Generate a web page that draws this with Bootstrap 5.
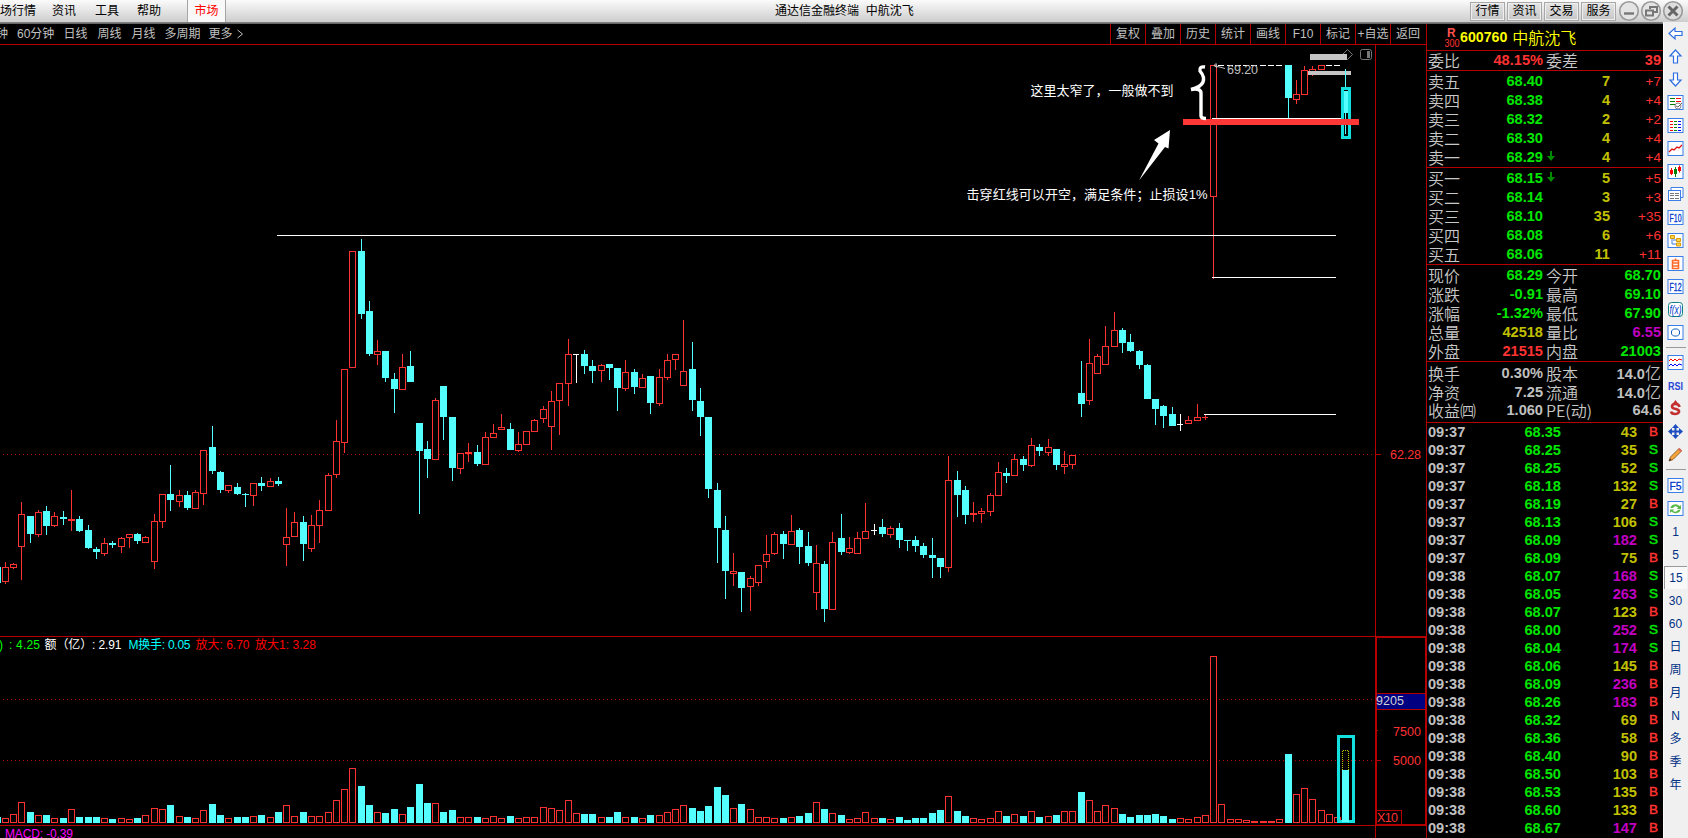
<!DOCTYPE html>
<html lang="zh-CN">
<head>
<meta charset="utf-8">
<title>通达信金融终端 中航沈飞</title>
<link href="https://cdn.jsdelivr.net/npm/bootstrap@5.3.0/dist/css/bootstrap.min.css" rel="stylesheet">
<style>
body{width:1688px;height:838px;overflow:hidden;background:#000;color:#c0c0c0;font-family:"Liberation Sans","Noto Sans CJK SC",sans-serif;font-size:12px;line-height:1}
.topbar{height:24px;background:linear-gradient(#fbfbfb,#cdcdcd 22px,#8a8a8a 22px,#5c5c5c 24px);color:#000}
.topbar>div{height:22px}
.menus{width:187px}
.menus span{white-space:nowrap}
.tab-market{width:39px;background:#f8f8f8;border:solid #a5a5a5;border-width:0 1px;color:#f00}
.app-title{width:549px}
.tbtn{width:35px;height:19px;border:1px solid #a8a8a8;box-shadow:inset 0 0 0 1px #eee;background:linear-gradient(#e4e4e4,#c6c6c6);white-space:nowrap}
.workarea{width:1427px}
.periodbar{height:21px;border-bottom:1px solid #b40000;border-right:1px solid #b40000}
.periodbar .plist{width:1110px;white-space:nowrap}
.tool{width:35px;border-left:1px solid #b40000;white-space:nowrap}
.chart{display:block;font-family:"Liberation Sans","Noto Sans CJK SC",sans-serif}
.quote{width:236px;height:814px;overflow:hidden}
.stockname{height:27px;border-bottom:1px solid #b40000;color:#ff0;font-size:15.5px}
.sect{border-bottom:1px solid #b40000;padding-top:1px}
.sect.five{height:97px}
.qrow{height:19px;display:grid;grid-template-columns:50px 65px 67px 51px;padding-left:1px;align-items:center;white-space:nowrap}
.qrow.pair{grid-template-columns:50px 65px 38px 80px}
.qrow.pair>i:nth-child(3){padding-left:3px}
.lbl,.qrow i{font-style:normal;font-size:16px;font-weight:350;font-family:"Noto Sans CJK SC",sans-serif;line-height:19px}
.qrow>i{color:#c8c8c8}
.qrow b{font-size:14.6px;text-align:right;line-height:19px;position:relative}
.qrow b .dn{position:absolute;left:68px;top:3px}
.qrow u{text-decoration:none;font-size:13.5px;text-align:right;color:#ff3232}
.trow{height:18px;display:grid;grid-template-columns:60px 73px 76px 21px;padding-left:1px;font-size:14.6px;font-weight:bold;line-height:18px;text-align:right}
.trow :first-child{text-align:left}
.trow .bs{font-size:13.5px;font-weight:400;-webkit-text-stroke:.5px}
.g{color:#00e600}.y{color:#c0c000}.r{color:#ff3232}.m{color:#c000c0}.w{color:#c0c0c0}
.side{width:25px;height:816px;margin-top:-2px;background:#f0f0f0;color:#003184;border-left:1px solid #fff}
.cell{height:23px;width:23px;font-size:12px}
.cell.on{background:#f9f9f9;border:solid #999;border-width:1px 0 0 1px}
.sep{height:7px;padding-top:3px}
.sep:after{content:"";display:block;height:1px;background:#9a9a9a;margin:0 2px}
</style>
<script src="https://cdn.jsdelivr.net/npm/bootstrap@5.3.0/dist/js/bootstrap.bundle.min.js"></script>
</head>
<body>
<header class="topbar d-flex">
  <div class="menus d-flex align-items-center"><span>场行情</span><span style="margin-left:16px">资讯</span><span style="margin-left:19px">工具</span><span style="margin-left:18px">帮助</span></div>
  <div class="tab-market d-flex align-items-center justify-content-center">市场</div>
  <div class="app-title flex-shrink-0"></div>
  <div class="d-flex align-items-center text-nowrap">通达信金融终端&nbsp;&nbsp;中航沈飞</div>
  <div class="d-flex align-items-center ms-auto" style="gap:2px">
    <span class="tbtn d-flex align-items-center justify-content-center">行情</span>
    <span class="tbtn d-flex align-items-center justify-content-center">资讯</span>
    <span class="tbtn d-flex align-items-center justify-content-center">交易</span>
    <span class="tbtn d-flex align-items-center justify-content-center">服务</span>
    <svg width="70" height="22" fill="none" stroke="#999">
      <g fill="#e4e4e4" stroke-width="1.6"><circle cx="11" cy="11" r="9.3"/><circle cx="33" cy="11" r="9.3"/><circle cx="55" cy="11" r="9.3" fill="#ddd"/></g>
      <path d="M6 13.500h10" stroke="#777" stroke-width="2.400"/>
      <path d="M32 9V7h7v5h-3" stroke="#777" stroke-width="2"/><rect x="28" y="10.500" width="7" height="5" stroke="#777" stroke-width="2" fill="#e4e4e4"/>
      <path d="M50.500 6.500l9 9M59.500 6.500l-9 9" stroke="#666" stroke-width="3"/>
    </svg>
  </div>
</header>
<main class="d-flex">
  <div class="workarea flex-shrink-0">
    <nav class="periodbar d-flex">
      <div class="plist d-flex align-items-center overflow-hidden"><span style="margin-left:-4px">钟</span><span style="margin-left:9px">60分钟</span><span style="margin-left:9px">日线</span><span style="margin-left:10px">周线</span><span style="margin-left:10px">月线</span><span style="margin-left:9px">多周期</span><span style="margin-left:8px">更多</span>
        <svg width="8" height="10" class="ms-1"><path d="M1.500 1l5 4-5 4" fill="none" stroke="#c0c0c0"/></svg></div>
      <div class="tool d-flex align-items-center justify-content-center">复权</div>
      <div class="tool d-flex align-items-center justify-content-center">叠加</div>
      <div class="tool d-flex align-items-center justify-content-center">历史</div>
      <div class="tool d-flex align-items-center justify-content-center">统计</div>
      <div class="tool d-flex align-items-center justify-content-center">画线</div>
      <div class="tool d-flex align-items-center justify-content-center">F10</div>
      <div class="tool d-flex align-items-center justify-content-center">标记</div>
      <div class="tool d-flex align-items-center justify-content-center">+自选</div>
      <div class="tool d-flex align-items-center justify-content-center">返回</div>
    </nav>
    <svg id="chart" class="chart" width="1427" height="793" viewBox="0 45 1427 793">
      <g fill="#b40000" shape-rendering="crispEdges">
        <rect x="1375" y="45" width="1" height="793"/><rect x="1426" y="45" width="1" height="793"/>
        <rect x="0" y="636" width="1427" height="1"/><rect x="0" y="825" width="1427" height="1"/>
        <rect x="1375" y="454" width="6" height="1"/><rect x="1376" y="730" width="2" height="1"/><rect x="1376" y="760" width="5" height="1"/>
      </g>
      <g stroke="#b40000" stroke-dasharray="1 3" shape-rendering="crispEdges"><path d="M3 454.500H1375M3 699.500H1375M3 760.500H1375"/></g>
      <rect x="1376" y="637" width="50" height="188" fill="none" stroke="#b40000" stroke-width="2" shape-rendering="crispEdges"/>
      <g shape-rendering="crispEdges" stroke="#b40000"><rect x="1376.500" y="693.500" width="49" height="16" fill="#000080"/><rect x="1376.500" y="810.500" width="25" height="14" fill="none"/></g>
      <g id="bars" shape-rendering="crispEdges"></g>
      <g shape-rendering="crispEdges">
        <g fill="#fff"><rect x="277" y="235" width="1059" height="1"/><rect x="1212" y="277" width="124" height="1"/><rect x="1204" y="414" width="132" height="1"/><rect x="1212" y="118" width="129" height="1"/></g>
        <rect x="1308" y="71" width="43" height="4" fill="#c4c4c4"/>
        <rect x="1342.500" y="88.500" width="7" height="49" fill="none" stroke="#14dfdf" stroke-width="3"/>
        <g fill="#54ffff"><rect x="1345" y="69" width="1" height="18"/><rect x="1344" y="91" width="4" height="22"/><rect x="1345" y="113" width="1" height="21"/></g>
        <rect x="1183" y="119" width="176" height="6" fill="#ff3737"/>
        <rect x="1338.500" y="736.500" width="15" height="85" fill="none" stroke="#14dfdf" stroke-width="3"/>
        <rect x="1342" y="770" width="7" height="52" fill="#54ffff"/>
        <path d="M1342.500 770V750.500H1348.500V770" fill="none" stroke="#c8c800" stroke-dasharray="1 1"/>
      </g>
      <path d="M1347.500 49.500l5 5-5 5-5-5z" fill="none" stroke="#777"/>
      <rect x="1310" y="54" width="37" height="6" fill="#c4c4c4"/>
      <rect x="1360.500" y="49.500" width="11" height="10" rx="2" fill="none" stroke="#777"/><rect x="1367" y="51" width="3" height="7" fill="#777"/>
      <path d="M1205 67Q1199 66 1200 71Q1205 77 1203 82Q1201 87 1191 89.500Q1201 88 1201 93V116Q1201 118.500 1206 118.500" fill="none" stroke="#fff" stroke-width="3.400"/>
      <path d="M1139 180.500L1158.500 143.500L1154 140L1170 130L1168.500 148.500L1165 147Z" fill="#fff"/>
      <path d="M1214 65.500L1225 68.500M1214 65.500l2-2 1 4z" fill="none" stroke="#c0c0c0"/>
      <g fill="#fff" font-size="13"><text x="1030.500" y="94.500" textLength="143">这里太窄了，一般做不到</text><text x="966.500" y="198.500" textLength="241">击穿红线可以开空，满足条件；止损设1%</text></g>
      <g font-size="12.500">
        <text x="1227" y="74" fill="#c0c0c0" textLength="31">69.20</text>
        <g fill="#ff3232"><text x="1390" y="459" textLength="31">62.28</text><text x="1393" y="736" textLength="28">7500</text><text x="1393" y="765" textLength="28">5000</text><text x="1377" y="822" textLength="21">X10</text></g>
        <text x="1376" y="705" fill="#d0d0d0" textLength="28">9205</text>
      </g>
      <g font-size="12">
        <text x="-1" y="649" fill="#0f0">)</text><text x="9" y="649" fill="#0f0" textLength="31">: 4.25</text>
        <text x="44.500" y="649" fill="#fff" textLength="77">额（亿）: 2.91</text>
        <text x="128.500" y="649" fill="#0ff" textLength="62">M换手: 0.05</text>
        <g fill="#f00"><text x="195.500" y="649" textLength="54">放大: 6.70</text><text x="255" y="649" textLength="61">放大1: 3.28</text></g>
        <text x="5" y="838" fill="#f0f" textLength="68">MACD: -0.39</text>
      </g>
    </svg>
  </div>
  <section class="quote flex-shrink-0">
    <div class="stockname d-flex align-items-center">
      <svg width="33" height="26" class="flex-shrink-0" font-family="Liberation Sans"><text x="20" y="13" font-size="12" font-weight="bold" fill="#ff5050">R</text><text x="17.500" y="23" font-size="11" fill="#ff3232" textLength="15" lengthAdjust="spacingAndGlyphs">300</text></svg>
      <b style="font-size:14.2px">600760</b><span class="lbl" style="margin-left:5px">中航沈飞</span>
    </div>
    <div class="sect" style="height:20px;padding:0"><div class="qrow pair"><i>委比</i><b class="r">48.15%</b><i>委差</i><b class="r">39</b></div></div>
    <div id="quotes"></div>
    <div id="ticks"></div>
  </section>
  <aside class="side flex-shrink-0" id="side"></aside>
</main>
<script>
// left, high, body top, body bottom, low, kind (r hollow, c filled, w/x flat), volume top
const K=`-6 567 567 583 583 c 817
2 562 567 582 584 r 818
10 563 564 568 569 r 814
18 502 514 547 580 r 802
27 516 516 534 543 c 812
35 510 512 535 537 r 815
43 506 511 526 535 c 815
51 512 516 526 527 r 818
60 511 517 519 525 c 818
68 490 519 521 531 r 809
76 516 519 531 532 c 817
85 525 530 548 549 c 817
93 547 549 552 559 c 817
101 538 543 554 556 r 818
109 541 543 545 548 c 819
118 537 538 547 553 r 818
126 534 534 538 548 r 819
134 533 534 541 544 c 818
142 536 537 543 543 r 815
151 514 521 562 569 r 808
159 494 494 522 528 r 809
167 465 494 500 511 c 805
176 490 495 502 507 r 816
184 491 495 508 510 c 817
192 490 492 509 509 r 818
200 450 450 494 505 r 810
209 426 447 471 474 c 804
217 471 472 490 493 c 815
225 485 485 491 493 r 818
234 483 487 494 495 c 817
242 493 494 495 507 c 817
250 483 483 496 506 r 816
258 477 483 486 491 c 815
267 478 481 487 487 r 817
275 477 481 484 486 c 812
283 508 537 545 566 r 805
291 512 522 537 537 r 816
300 516 522 544 561 c 812
308 515 525 549 552 r 816
316 500 510 526 543 r 816
325 473 475 511 511 r 812
333 420 441 475 478 r 800
341 369 369 443 453 r 789
349 251 251 368 368 r 768
358 239 251 314 319 c 786
366 301 311 354 356 c 805
374 340 351 355 365 r 812
382 351 351 378 382 c 813
391 373 379 389 413 c 809
399 354 367 390 390 r 814
407 351 366 382 382 c 807
416 423 423 451 514 c 784
424 441 449 459 478 c 803
432 398 400 460 460 r 803
440 386 386 417 440 c 812
449 417 417 468 481 c 810
457 453 453 469 474 r 817
465 443 452 454 462 r 817
474 445 452 464 466 c 817
482 432 437 465 465 r 818
490 424 433 438 438 r 816
498 414 427 430 430 r 818
507 423 429 450 450 c 816
515 432 444 451 452 r 818
523 431 431 445 445 r 817
531 419 420 432 432 r 817
540 406 409 419 423 r 807
548 391 401 427 450 r 808
556 383 383 401 435 r 810
565 339 354 384 406 r 800
573 354 354 355 383 w 813
581 350 354 366 374 c 814
589 360 366 371 383 c 814
598 364 365 371 382 r 817
606 364 364 368 380 c 817
614 368 368 388 411 c 812
622 360 372 389 391 r 817
631 369 372 387 394 c 817
639 374 378 388 388 r 818
647 376 376 403 414 c 815
656 369 377 404 406 r 815
664 354 360 378 380 r 812
672 354 354 360 370 r 809
680 320 371 386 386 r 805
689 342 369 400 411 c 808
697 388 401 417 436 c 811
705 417 417 489 498 c 806
714 483 490 528 563 c 787
722 516 530 571 599 c 795
730 553 571 574 586 r 808
738 572 572 588 612 c 804
747 576 578 587 611 r 809
755 565 565 583 586 r 817
763 535 554 562 568 r 817
771 532 534 554 555 r 818
780 531 534 544 559 c 818
788 515 531 545 545 r 817
796 528 530 547 564 c 816
805 532 546 563 566 c 813
813 545 563 593 610 r 802
821 561 564 609 622 c 809
829 532 542 610 610 r 813
838 514 538 552 555 c 815
846 537 548 553 554 r 819
854 532 538 554 554 r 818
862 503 531 539 539 r 812
871 524 530 531 535 w 818
879 519 527 534 537 c 818
887 526 528 535 538 r 819
896 523 528 540 548 c 817
904 540 540 541 551 c 820
912 536 540 546 552 c 818
920 543 546 555 558 c 818
929 538 555 558 578 c 813
937 558 558 567 578 c 810
945 456 480 568 572 r 796
954 471 480 495 517 c 811
962 486 490 515 524 c 816
970 502 513 515 522 r 818
978 508 511 514 523 r 819
987 493 495 512 516 r 818
995 462 472 496 496 r 811
1003 468 473 476 483 c 816
1011 454 459 476 476 r 814
1020 456 459 465 471 c 816
1028 438 445 466 467 r 811
1036 444 447 451 456 c 817
1045 439 447 453 456 r 816
1053 449 449 465 470 c 815
1061 451 464 467 474 r 811
1069 455 455 465 469 r 811
1078 361 393 404 417 c 792
1086 339 363 401 405 r 800
1094 354 356 374 374 r 811
1102 326 346 365 365 r 805
1111 312 330 347 347 r 808
1119 328 330 343 353 c 814
1127 334 342 351 352 c 817
1136 350 351 365 369 c 815
1144 364 365 399 399 c 815
1152 399 399 409 425 c 814
1160 405 406 416 428 c 816
1169 407 414 426 426 c 819
1177 414 424 425 431 w 818
1185 416 420 424 424 r 819
1194 404 417 421 421 r 817
1202 415 417 418 420 x 815
1210 65 65 197 279 r 656
1218 65 65 66 66 w 804
1227 65 65 66 66 w 819
1235 65 65 66 66 w 819
1243 65 65 66 66 w 820
1251 65 65 66 66 w 821
1260 65 65 66 66 w 821
1268 65 65 66 66 w 821
1276 65 65 66 66 w 819
1285 65 65 98 118 c 754
1293 80 94 100 104 r 794
1301 66 70 95 95 r 788
1309 66 69 73 76 r 799
1318 65 65 70 70 r 810
1326 65 65 66 66 w 814
1334 65 65 66 66 w 817`;
const col={r:'#ff3232',c:'#54ffff',w:'#fff',x:'#ff3232'};
const fr=(x,y,w,h,c)=>`<rect x="${x}" y="${y}" width="${w}" height="${h}" fill="${c}"/>`;
const hollow=(x,y,w,h)=>h<3?fr(x,y,w,h,col.r):`<rect x="${x+.5}" y="${y+.5}" width="${w-1}" height="${h-1}" fill="#000" stroke="${col.r}"/>`;
document.getElementById('bars').innerHTML=K.split('\n').map(l=>{
  const a=l.split(' '),k=a[5],[x,h,t,b,lo]=a.map(Number),v=+a[6];
  let s=lo-h>1?fr(x+3,h,1,lo-h,col[k]):'';
  s+=k==='r'?hollow(x,t,7,b-t):fr(x,t,k==='c'?7:6,b-t,col[k]);
  return s+(k==='c'?fr(x,v,7,823-v,col.c):hollow(x,v,7,823-v));
}).join('');

const down='<svg class="dn" width="10" height="11"><path d="M4 0h2v5h3L5 10 1 5h3z" fill="#008a00"/></svg>';
const lv=a=>'<div class="sect five">'+a.map(([n,p,q,d,s])=>`<div class="qrow"><i>${n}</i><b class="g">${p}${s?down:''}</b><b class="y">${q}</b><u>+${d}</u></div>`).join('')+'</div>';
const pr=(a,h)=>`<div class="sect" style="height:${h}px">`+a.map(([n,p,c,m,q,d])=>`<div class="qrow pair"><i>${n}</i><b class="${c}">${p}</b><i>${m}</i><b class="${d}">${q}</b></div>`).join('')+'</div>';
document.getElementById('quotes').innerHTML=
 lv([['卖五','68.40',7,7],['卖四','68.38',4,4],['卖三','68.32',2,2],['卖二','68.30',4,4],['卖一','68.29',4,4,1]])+
 lv([['买一','68.15',5,5,1],['买二','68.14',3,3],['买三','68.10',35,35],['买四','68.08',6,6],['买五','68.06',11,11]])+
 pr([['现价','68.29','g','今开','68.70','g'],['涨跌','-0.91','g','最高','69.10','g'],['涨幅','-1.32%','g','最低','67.90','g'],['总量','42518','y','量比','6.55','m'],['外盘','21515','r','内盘','21003','g']],97)+
 pr([['换手','0.30%','w','股本','14.0<i>亿</i>','w'],['净资','7.25','w','流通','14.0<i>亿</i>','w'],['收益㈣','1.060','w','PE(动)','64.6','w']],61);
document.getElementById('ticks').innerHTML=`37 68.35 43 B
37 68.25 35 S
37 68.25 52 S
37 68.18 132 S
37 68.19 27 B
37 68.13 106 S
37 68.09 182 S
37 68.09 75 B
38 68.07 168 S
38 68.05 263 S
38 68.07 123 B
38 68.00 252 S
38 68.04 174 S
38 68.06 145 B
38 68.09 236 B
38 68.26 183 B
38 68.32 69 B
38 68.36 58 B
38 68.40 90 B
38 68.50 103 B
38 68.53 135 B
38 68.60 133 B
38 68.67 147 B`.split('\n').map(l=>{const[t,p,q,s]=l.split(' ');
 return `<div class="trow"><span>09:${t}</span><span class="g">${p}</span><span class="${+q>145?'m':'y'}">${q}</span><span class="bs ${s==='B'?'r':'g'}">${s}</span></div>`}).join('');

const box=s=>`<rect x="1" y="1.500" width="15" height="14" fill="#fff" stroke="#3c7ee8"/>`+s;
const bt=t=>box(`<text x="2.500" y="13" font-size="10.500" textLength="12" lengthAdjust="spacingAndGlyphs" fill="#0038c8" stroke="#0038c8" stroke-width=".3" font-family="Liberation Sans">${t}</text>`);
const arrow=r=>`<path transform="rotate(${r} 8.500 8.500)" d="M2 8.500l6-5.500v3.500h7v4H8V14z" fill="#fff" stroke="#2f6ee0" stroke-width="1.200"/>`;
const icons=[arrow(0),arrow(90),arrow(270),
 box('<path d="M3 4.500h5M3 7.500h5M3 10.500h5" stroke="green"/><path d="M9 4.500h5M9 7.500h5" stroke="red"/><circle cx="11" cy="12" r="3" fill="#fff" stroke="#888"/><path d="M9 12l2 1 4-4" stroke="#666"/>'),
 box('<path d="M3 4.500h3M3 7.500h3M3 10.500h3M3 13.500h3" stroke="red"/><path d="M7 4.500h3M7 7.500h3M7 10.500h3M7 13.500h3" stroke="green"/><path d="M11 4.500h3M11 7.500h3M11 10.500h3M11 13.500h3" stroke="blue"/>'),
 box('<path d="M2 12l3-3 2 1 3-3 2 1 3-3" stroke="#e01010" stroke-width="1.300"/>'),
 box('<path d="M4.500 5v7M12.500 2.500v7" stroke="red"/><path d="M8.500 4v10" stroke="green"/><path d="M3 7h3v4H3zM11 4h3v4h-3z" fill="red"/><path d="M7 6h3v5H7z" fill="green"/>'),
 '<path d="M4 4V1.500h12v10h-3" fill="#fff" stroke="#3c7ee8"/><rect x="1.500" y="4.500" width="12" height="10" fill="#fff" stroke="#3c7ee8"/><path d="M3 7.500h4M8 7.500h4M3 9.500h4M8 9.500h4M3 12.500h4M8 12.500h4" stroke="#777"/>',
 bt('F10'),
 box('<path d="M5 6v6h4M6 8h4" stroke="#3c7ee8"/><path d="M3.500 3.500h4v3h-4zM9.500 6.500h4v3h-4zM9.500 11h4v3h-4z" fill="#ffd34d" stroke="#d89b00"/>'),
 box('<path d="M5.500 5.500h6v8h-6zM5.500 8h6M5.500 11h6M8.500 3.500v2" stroke="#ff6a2a" stroke-width="1.600"/>'),
 bt('F12'),
 '<rect x="1.500" y="1.500" width="14" height="14" rx="3" fill="#fff" stroke="#108080"/><text x="2.500" y="12.500" font-size="12" font-style="italic" textLength="12" lengthAdjust="spacingAndGlyphs" fill="#0038c8">f(x)</text>',
 box('<path d="M6.500 5h4l2 2v3l-2 2h-4l-2-2V7z" stroke="#1060c0"/>'),
 'sep',
 box('<path d="M2 7l2-2 2 2 2-2 2 2 2-2 3 1" stroke="red"/><path d="M2 12l2-2 2 2 2-2 2 2 2-2 3 1" stroke="blue"/>'),
 '<text x="1" y="12.500" font-size="11.500" font-weight="bold" textLength="15" lengthAdjust="spacingAndGlyphs" fill="#2848d8" font-family="Liberation Sans">RSI</text>',
 '<path d="M12.500 7Q12 4 8.500 4Q5 4 5 6.500Q5 8.500 9 9Q12.500 10 12 12Q11 14 8 14Q4.500 14 4 11.500" stroke="#c43030" stroke-width="2.600"/><path d="M8.500 0l3 4h-6z" fill="#c43030"/>',
 '<path d="M8.500 3v11M3 8.500h11" stroke="#1c4ec0" stroke-width="2"/><path d="M8.500 1l3.500 4h-7zM8.500 16l3.500-4h-7zM1 8.500L5 5v7zM16 8.500l-4-3.500v7z" fill="#1c4ec0"/>',
 '<path d="M2 15l1.500-4L12 2.500l2.500 2.500L6 13.500z" fill="#f3a53c" stroke="#9b6225"/><path d="M11 3.500l1.500-1.500 2.500 2.500-1.500 1.500z" fill="#d66"/><path d="M2 15l1-2.500 1.500 1.500z" fill="#333"/>',
 'sep',bt('F5'),
 box('<path d="M3.500 8a5 4 0 0 1 9-2l1.500-1v4h-4l1-1.500Q8 5 6 8M13.500 9.500a5 4 0 0 1-9 2L3 13V9.500h4L6 11q3 2 5-1" fill="#58b848"/>')];
let side=icons.map((s,i)=>s==='sep'?`<div class="sep"${i>15?' style="height:8px"':''}></div>`:`<div class="cell d-flex align-items-center justify-content-center"><svg width="17" height="17" fill="none">${s}</svg></div>`).join('');
side+=['1','5','15','30','60','日','周','月','N','多','季','年'].map(t=>`<div class="cell d-flex align-items-center justify-content-center${t==='15'?' on':''}">${t}</div>`).join('');
document.getElementById('side').innerHTML=side;
</script>
</body>
</html>
